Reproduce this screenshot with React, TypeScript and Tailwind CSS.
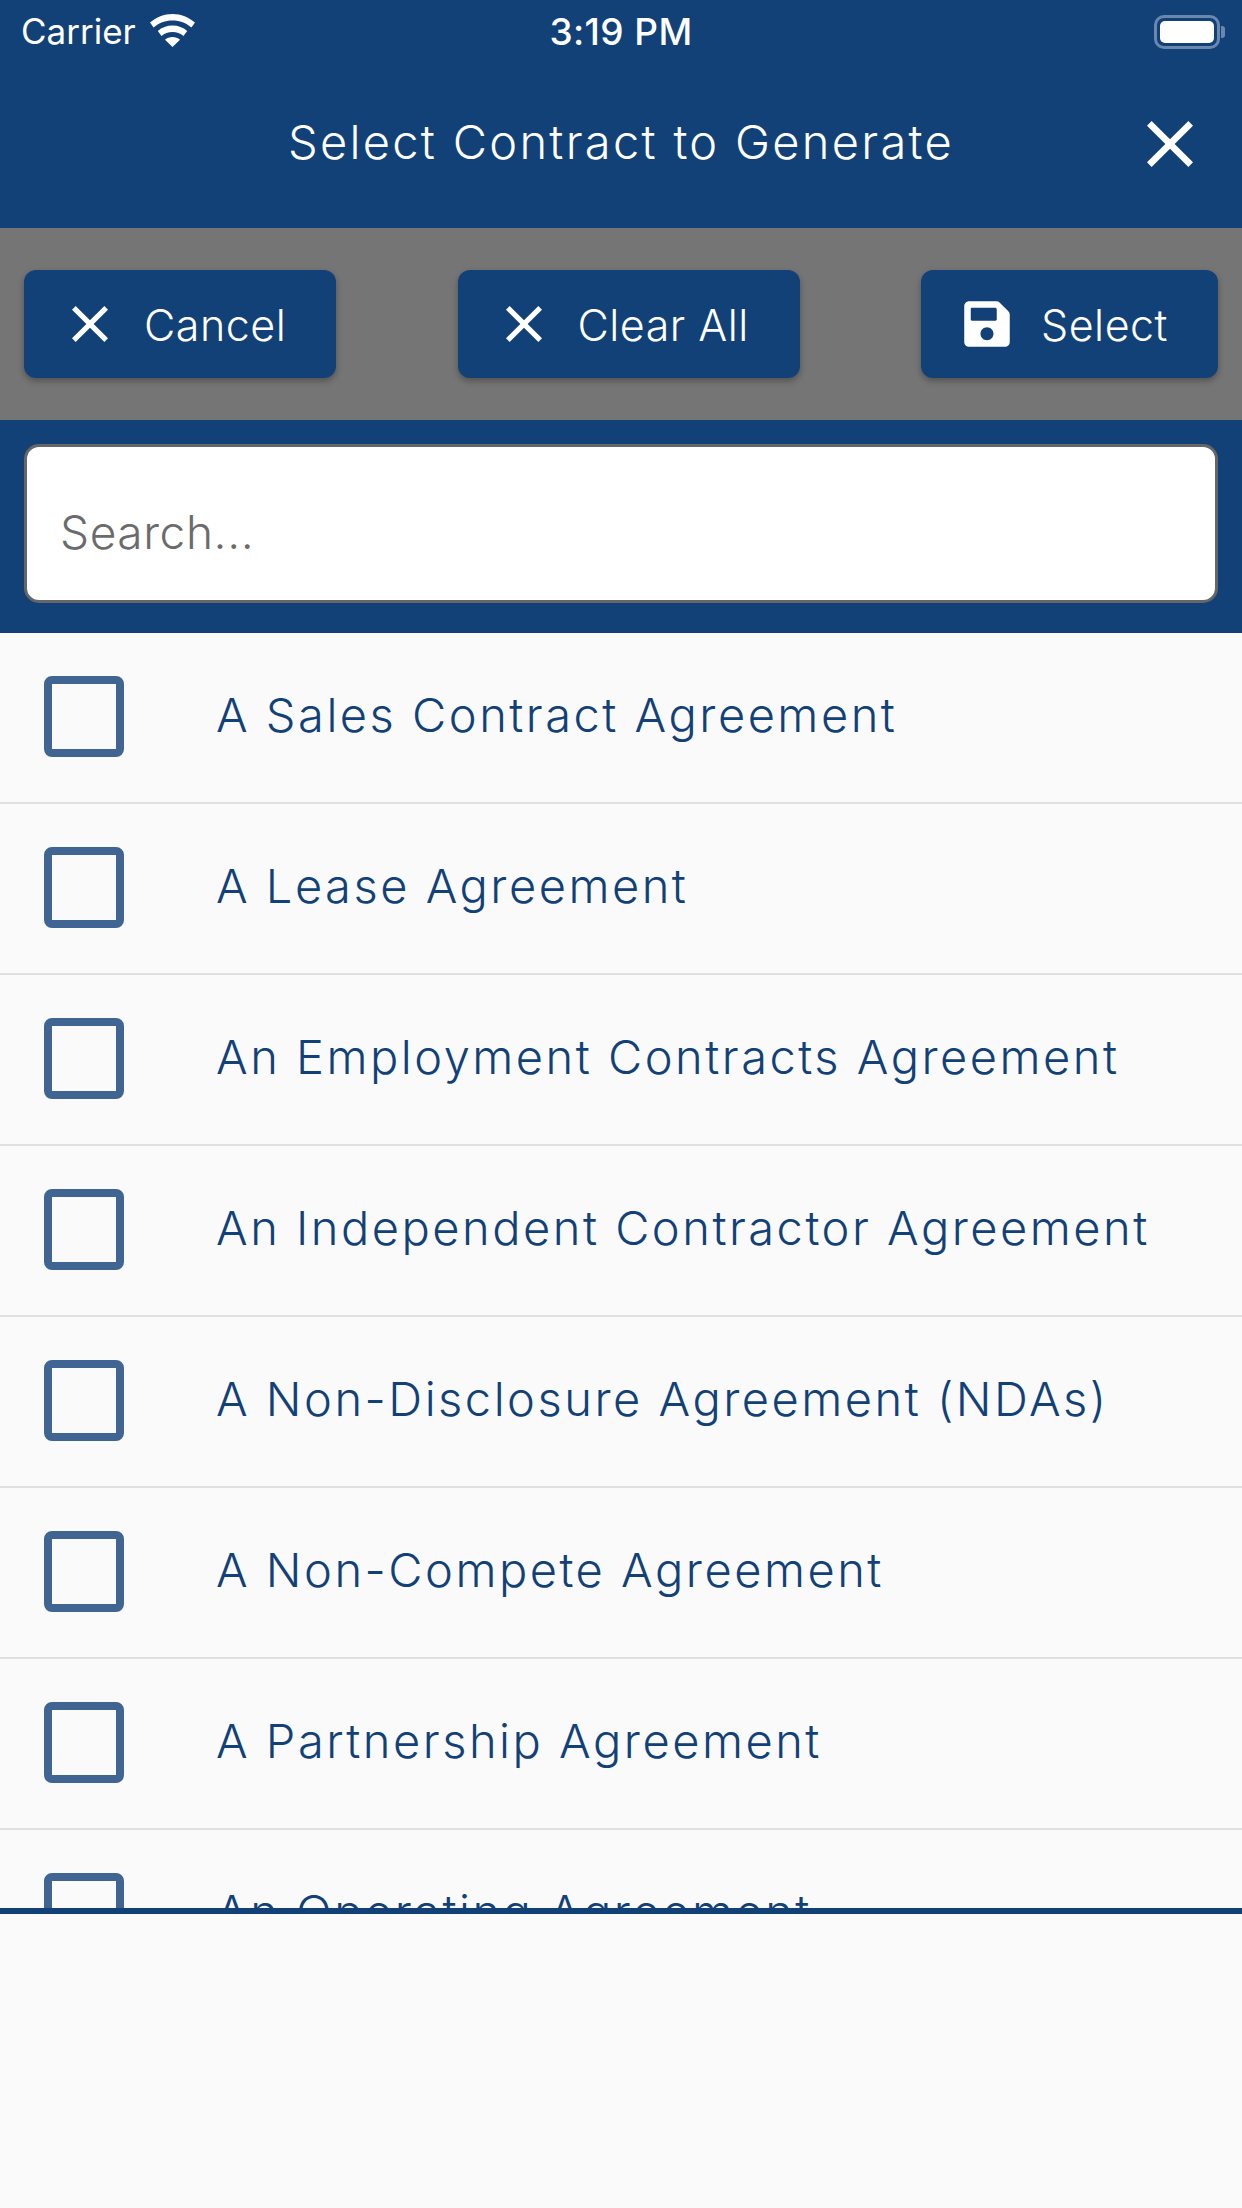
import React from 'react';
import { FaSave } from 'react-icons/fa';

const contracts = [
  'A Sales Contract Agreement',
  'A Lease Agreement',
  'An Employment Contracts Agreement',
  'An Independent Contractor Agreement',
  'A Non-Disclosure Agreement (NDAs)',
  'A Non-Compete Agreement',
  'A Partnership Agreement',
  'An Operating Agreement',
];

function CloseIcon({ className }: { className: string }) {
  return (
    <svg viewBox="5 5 14 14" fill="#ffffff" className={className}>
      <path d="M19 6.41L17.59 5 12 10.59 6.41 5 5 6.41 10.59 12 5 17.59 6.41 19 12 13.41 17.59 19 19 17.59 13.41 12z" />
    </svg>
  );
}

function StatusBar() {
  return (
    <div className="flex h-[60px] items-center justify-between pl-[21px] pr-[17px] pt-[3px] font-['Inter',sans-serif] text-[35px] text-white">
      <div className="flex w-[300px] items-center gap-[14px]">
        <span>Carrier</span>
        {/* Wifi */}
        <svg viewBox="0 0 45 33" className="mb-[3px] h-[33px] w-[45px]" fill="#ffffff">
          <path d="M22.5 0C14 0 6.3 3.2 0 8.6l3.6 4.8C8.7 9 15.3 6.400 22.500 6.400S36.300 9 41.400 13.400L45 8.600C38.700 3.200 31 0 22.500 0z" />
          <path d="M22.5 11.6c-5.6 0-10.7 2-14.7 5.4l3.7 4.9c3-2.5 6.800-4 11-4s8 1.500 11 4l3.700-4.900c-4-3.400-9.100-5.400-14.700-5.400z" />
          <path d="M22.5 23c-2.900 0-5.500 1-7.500 2.700L22.500 33l7.500-7.300C28 24 25.400 23 22.500 23z" />
        </svg>
      </div>
      <span className="mr-[4px] text-[37px] font-medium tracking-[0.4px]">3:19 PM</span>
      <div className="flex w-[300px] items-center justify-end">
        {/* Battery */}
        <div className="flex h-[34px] w-[66px] items-center justify-center rounded-[10px] border-[3px] border-[#6a88ad]">
          <div className="h-[22px] w-[54px] rounded-[5px] bg-white" />
        </div>
        <div className="ml-[1px] h-[12px] w-[4px] rounded-r-[3px] bg-[#6a88ad]" />
      </div>
    </div>
  );
}

function ActionButton({ widthClass, paddingClass, icon, label }: { widthClass: string; paddingClass: string; icon: React.ReactNode; label: string }) {
  return (
    <button className={`flex h-[108px] items-center rounded-[12px] bg-[#124178] shadow-[0_3px_6px_rgba(0,0,0,0.3)] ${widthClass} ${paddingClass}`}>
      {icon}
      <span className="pt-[3px] text-[43px] font-light tracking-[0.5px] text-white">{label}</span>
    </button>
  );
}

export default function App() {
  return (
    <div className="flex h-[2208px] w-[1242px] flex-col overflow-hidden bg-[#fafafa] font-['Inter',sans-serif]">
      {/* Header */}
      <header className="h-[228px] bg-[#124178]">
        <StatusBar />
        <div className="relative flex h-[164px] items-center justify-center">
          <h1 className="text-[47px] font-light tracking-[2.3px] text-white">Select Contract to Generate</h1>
          <CloseIcon className="absolute right-[49px] top-[61px] h-[46px] w-[46px]" />
        </div>
      </header>

      {/* Actions */}
      <div className="flex h-[192px] items-center justify-between bg-[#757575] px-6">
        <ActionButton
          widthClass="w-[312px]"
          paddingClass="pl-[48px]"
          label="Cancel"
          icon={<CloseIcon className="mr-[36px] h-[36px] w-[36px]" />}
        />
        <ActionButton
          widthClass="w-[342px]"
          paddingClass="pl-[48px]"
          label="Clear All"
          icon={<CloseIcon className="mr-[36px] h-[36px] w-[36px]" />}
        />
        <ActionButton
          widthClass="w-[297px]"
          paddingClass="pl-[43px]"
          label="Select"
          icon={<FaSave className="mr-[31px] h-[52px] w-[46px] text-white" />}
        />
      </div>

      {/* Search */}
      <div className="flex h-[213px] items-start bg-[#124178] px-6 pt-6">
        <input
          placeholder="Search..."
          className="h-[159px] w-full rounded-[15px] border-[3px] border-[#666666] bg-white pl-[33px] pt-[16px] text-[46px] font-light tracking-[0.6px] placeholder:text-[#6b6b6b]"
        />
      </div>

      {/* Contract list */}
      <div className="h-[1275px] overflow-hidden">
        {contracts.map((name) => (
          <div key={name} className="flex h-[171px] shrink-0 items-center border-b-2 border-[#e0e0e0] pb-[3px] pl-[44px]">
            <div className="mr-[92px] h-[81px] w-[80px] shrink-0 rounded-[8px] border-[8px] border-[#406593]" />
            <span className="pb-[2px] text-[47px] font-light tracking-[2.5px] text-[#124178]">{name}</span>
          </div>
        ))}
      </div>
      <div className="h-[6px] bg-[#124178]" />
    </div>
  );
}
